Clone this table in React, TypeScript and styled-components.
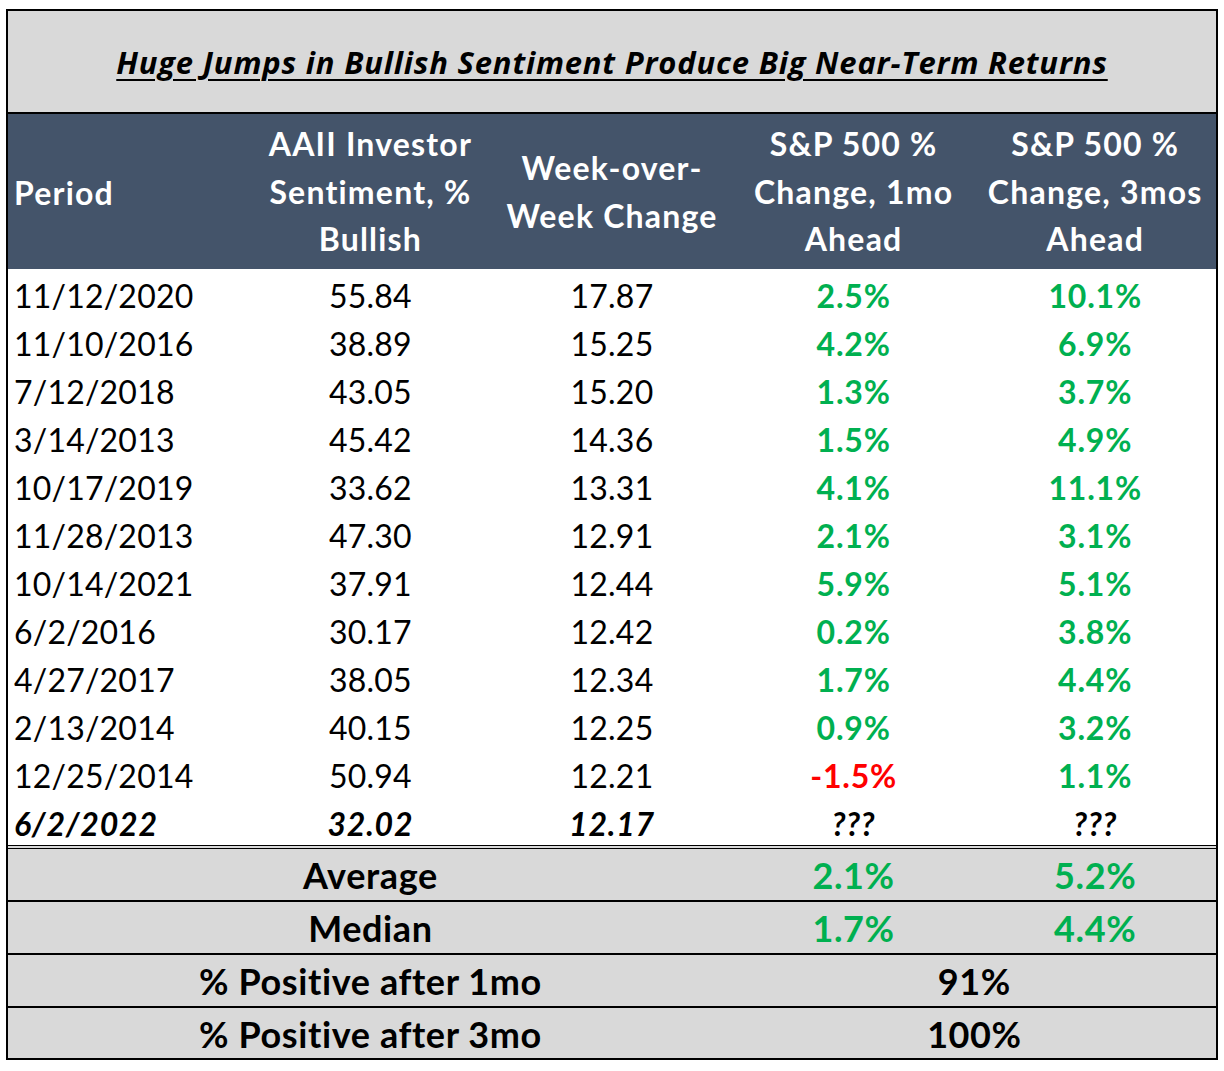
import React from "react";
import styled, { createGlobalStyle } from "styled-components";

const GlobalStyle = createGlobalStyle`
  body {
    margin: 0;
    background: #ffffff;
    font-family: Lato, "Open Sans", "Liberation Sans", sans-serif;
  }
`;

interface Row {
  period: string;
  bullish: string;
  change: string;
  oneMonth: string;
  threeMonths: string;
}

const rows: Row[] = [
  { period: "11/12/2020", bullish: "55.84", change: "17.87", oneMonth: "2.5%", threeMonths: "10.1%" },
  { period: "11/10/2016", bullish: "38.89", change: "15.25", oneMonth: "4.2%", threeMonths: "6.9%" },
  { period: "7/12/2018", bullish: "43.05", change: "15.20", oneMonth: "1.3%", threeMonths: "3.7%" },
  { period: "3/14/2013", bullish: "45.42", change: "14.36", oneMonth: "1.5%", threeMonths: "4.9%" },
  { period: "10/17/2019", bullish: "33.62", change: "13.31", oneMonth: "4.1%", threeMonths: "11.1%" },
  { period: "11/28/2013", bullish: "47.30", change: "12.91", oneMonth: "2.1%", threeMonths: "3.1%" },
  { period: "10/14/2021", bullish: "37.91", change: "12.44", oneMonth: "5.9%", threeMonths: "5.1%" },
  { period: "6/2/2016", bullish: "30.17", change: "12.42", oneMonth: "0.2%", threeMonths: "3.8%" },
  { period: "4/27/2017", bullish: "38.05", change: "12.34", oneMonth: "1.7%", threeMonths: "4.4%" },
  { period: "2/13/2014", bullish: "40.15", change: "12.25", oneMonth: "0.9%", threeMonths: "3.2%" },
  { period: "12/25/2014", bullish: "50.94", change: "12.21", oneMonth: "-1.5%", threeMonths: "1.1%" },
];

const tone = (v: string) => (v.startsWith("-") ? "neg" : "pos");

const App: React.FC = () => {
  return (
    <>
      <GlobalStyle />
      <Sheet>
        <TitleBar>
          <h1>Huge Jumps in Bullish Sentiment Produce Big Near-Term Returns</h1>
        </TitleBar>
        <HeaderRow>
          <HeadCell $left>Period</HeadCell>
          <HeadCell>AAII Investor<br />Sentiment, %<br />Bullish</HeadCell>
          <HeadCell>Week-over-<br />Week Change</HeadCell>
          <HeadCell>S&amp;P 500 %<br />Change, 1mo<br />Ahead</HeadCell>
          <HeadCell>S&amp;P 500 %<br />Change, 3mos<br />Ahead</HeadCell>
        </HeaderRow>
        <Body>
          {rows.map((r) => (
            <DataRow key={r.period}>
              <Cell $left>{r.period}</Cell>
              <Cell>{r.bullish}</Cell>
              <Cell>{r.change}</Cell>
              <Cell $tone={tone(r.oneMonth)}>{r.oneMonth}</Cell>
              <Cell $tone={tone(r.threeMonths)}>{r.threeMonths}</Cell>
            </DataRow>
          ))}
          <DataRow $current>
            <Cell $left>6/2/2022</Cell>
            <Cell>32.02</Cell>
            <Cell>12.17</Cell>
            <Cell>???</Cell>
            <Cell>???</Cell>
          </DataRow>
        </Body>
        <Summary>
          <SummaryRow>
            <Label>Average</Label>
            <Value $tone="pos">2.1%</Value>
            <Value $tone="pos">5.2%</Value>
          </SummaryRow>
          <SummaryRow>
            <Label>Median</Label>
            <Value $tone="pos">1.7%</Value>
            <Value $tone="pos">4.4%</Value>
          </SummaryRow>
          <SummaryRow>
            <Label>% Positive after 1mo</Label>
            <Value $wide>91%</Value>
          </SummaryRow>
          <SummaryRow>
            <Label>% Positive after 3mo</Label>
            <Value $wide>100%</Value>
          </SummaryRow>
        </Summary>
      </Sheet>
    </>
  );
};

const Sheet = styled.div`
  width: 1212px;
  box-sizing: border-box;
  margin: 9px 0 0 6px;
  border: 2px solid #000000;
  background: #ffffff;
  color: #000000;
`;

const TitleBar = styled.div`
  height: 101px;
  background: #d9d9d9;
  border-bottom: 2px solid #000000;
  display: flex;
  align-items: center;
  justify-content: center;
  h1 {
    margin: 0;
    padding-top: 0;
    font-family: "Open Sans", Lato, sans-serif;
    font-size: 31px;
    font-weight: 700;
    font-style: italic;
    letter-spacing: 0.8px;
    text-decoration: underline;
    text-underline-offset: 5px;
    text-decoration-thickness: 2px;
  }
`;

const grid = `
  display: grid;
  grid-template-columns: repeat(5, 1fr);
`;

const HeaderRow = styled.div`
  ${grid}
  height: 155px;
  background: #44546a;
  color: #ffffff;
`;

const HeadCell = styled.div<{ $left?: boolean }>`
  display: flex;
  align-items: center;
  justify-content: ${(p) => (p.$left ? "flex-start" : "center")};
  text-align: ${(p) => (p.$left ? "left" : "center")};
  padding: 2px ${(p) => (p.$left ? "0 0 6px" : "0")};
  font-size: 32px;
  font-weight: 700;
  letter-spacing: 1.2px;
  line-height: 47.5px;
  white-space: nowrap;
`;

const Body = styled.div``;

const DataRow = styled.div<{ $current?: boolean }>`
  ${grid}
  height: 48px;
  font-weight: ${(p) => (p.$current ? 700 : 400)};
  font-style: ${(p) => (p.$current ? "italic" : "normal")};
  letter-spacing: ${(p) => (p.$current ? "0.8px" : "0.2px")};
`;

const Cell = styled.div<{ $left?: boolean; $tone?: "pos" | "neg" }>`
  box-sizing: border-box;
  padding: 6px 0 0 ${(p) => (p.$left ? "6px" : "0")};
  text-align: ${(p) => (p.$left ? "left" : "center")};
  font-size: 32px;
  line-height: 42px;
  font-weight: ${(p) => (p.$tone ? 700 : "inherit")};
  letter-spacing: ${(p) => (p.$tone ? "0.8px" : "inherit")};
  color: ${(p) => (p.$tone === "pos" ? "#00b050" : p.$tone === "neg" ? "#ff0000" : "inherit")};
`;

const Summary = styled.div`
  border-top: 4px double #000000;
  background: #d9d9d9;
`;

const SummaryRow = styled.div`
  ${grid}
  height: 51px;
  & + & {
    border-top: 2px solid #000000;
  }
  &:last-child {
    height: 50px;
  }
`;

const Label = styled.div`
  grid-column: span 3;
  text-align: center;
  font-size: 36px;
  font-weight: 700;
  letter-spacing: 0.6px;
  line-height: 51px;
  padding-top: 1px;
`;

const Value = styled.div<{ $tone?: "pos" | "neg"; $wide?: boolean }>`
  grid-column: ${(p) => (p.$wide ? "span 2" : "span 1")};
  text-align: center;
  font-size: 36px;
  font-weight: 700;
  letter-spacing: 0.6px;
  line-height: 51px;
  padding-top: 1px;
  color: ${(p) => (p.$tone === "pos" ? "#00b050" : "#000000")};
`;

export default App;
